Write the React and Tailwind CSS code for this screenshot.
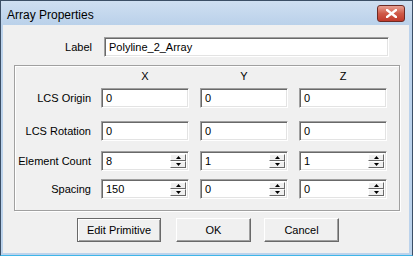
import React from 'react';

const font = { fontFamily: '"Liberation Sans", Arial, sans-serif' };

// sunken edit box, classic look
function Field({ value, w = 'w-[88px]', spin }) {
  return (
    <div
      className={`relative ${w} h-[20px] bg-white border border-t-[#a0a0a0] border-l-[#a0a0a0] border-b-white border-r-white shadow-[inset_1px_1px_0_#696969,inset_-1px_-1px_0_#e3e3e3] flex items-center pl-[4px] text-[11px] text-black`}
    >
      {value}
      {spin && (
        <div className="absolute right-[2px] top-[2px] bottom-[2px] w-[16px] flex flex-col">
          <SpinBtn up />
          <SpinBtn />
        </div>
      )}
    </div>
  );
}

function SpinBtn({ up }) {
  return (
    <div className="flex-1 bg-[#f0f0f0] border border-t-white border-l-white border-b-[#696969] border-r-[#696969] flex items-center justify-center">
      <svg width="5" height="3" viewBox="0 0 5 3">
        {up ? <path d="M0 3h5L2.5 0z" fill="#000" /> : <path d="M0 0h5L2.5 3z" fill="#000" />}
      </svg>
    </div>
  );
}

function Btn({ children, w, focus }) {
  return (
    <button
      className={`${w} h-[24px] bg-[#f0f0f0] text-[11px] text-black flex items-center justify-center border ${
        focus
          ? 'border-[#696969] shadow-[inset_1px_1px_0_#fff,inset_-1px_-1px_0_#a0a0a0]'
          : 'border-t-white border-l-white border-b-[#696969] border-r-[#696969] shadow-[inset_-1px_-1px_0_#a0a0a0]'
      }`}
    >
      {children}
    </button>
  );
}

const rows = [
  { label: 'LCS Origin', vals: ['0', '0', '0'], mt: 'mt-[5px]' },
  { label: 'LCS Rotation', vals: ['0', '0', '0'], mt: 'mt-[13px]' },
  { label: 'Element Count', vals: ['8', '1', '1'], mt: 'mt-[10px]', spin: true },
  { label: 'Spacing', vals: ['150', '0', '0'], mt: 'mt-[8px]', spin: true },
];

export default function App() {
  return (
    <div style={font} className="w-[413px] h-[256px] bg-[#bcd3ec] border border-[#3c4f66] border-b-[#3fb6e8] flex flex-col overflow-hidden">
      {/* title bar */}
      <div className="h-[24px] shrink-0 flex items-center justify-between pt-[3px] pl-[6px] pr-[7px] bg-gradient-to-b from-[#cfdff1] to-[#bad1ea]">
        <span className="text-[12px] text-black">Array Properties</span>
        <div className="w-[28px] h-[17px] mt-[-2px] rounded-[3px] border border-[#6d2a24] bg-gradient-to-b from-[#e8a093] via-[#cf5a48] to-[#c0392b] flex items-center justify-center">
          <svg width="11" height="9" viewBox="0 0 11 9">
            <path d="M1 1l9 7M10 1L1 8" stroke="#fff" strokeWidth="2.4" strokeLinecap="square" />
          </svg>
        </div>
      </div>

      {/* client area */}
      <div className="flex-1 bg-[#f0f0f0] ml-[2px] mr-[3px] mb-[2px] flex flex-col">
        <div className="mt-[12px] flex items-center">
          <span className="w-[89px] text-right text-[11px] text-black">Label</span>
          <div className="ml-[12px]">
            <Field value="Polyline_2_Array" w="w-[285px]" />
          </div>
        </div>

        {/* group box */}
        <div className="mt-[8px] ml-[11px] w-[386px] h-[146px] border border-[#a0a0a0] shadow-[inset_1px_1px_0_#fff,1px_1px_0_#fff] flex flex-col">
          <div className="mt-[4px] h-[13px] flex text-[11px] text-black leading-[13px]">
            <div className="w-[86px]" />
            <div className="w-[88px] text-center">X</div>
            <div className="w-[88px] ml-[11px] text-center">Y</div>
            <div className="w-[88px] ml-[11px] text-center">Z</div>
          </div>
          {rows.map((r) => (
            <div key={r.label} className={`${r.mt} flex items-center`}>
              <span className="w-[76px] text-right text-[11px] text-black whitespace-nowrap">{r.label}</span>
              <div className="ml-[10px] flex gap-[11px]">
                {r.vals.map((v, i) => (
                  <Field key={i} value={v} spin={r.spin} />
                ))}
              </div>
            </div>
          ))}
        </div>

        <div className="mt-[7px] ml-[74px] flex">
          <Btn w="w-[84px]" focus>Edit Primitive</Btn>
          <Btn w="w-[75px] ml-[15px]">OK</Btn>
          <Btn w="w-[75px] ml-[13px]">Cancel</Btn>
        </div>
      </div>
    </div>
  );
}
